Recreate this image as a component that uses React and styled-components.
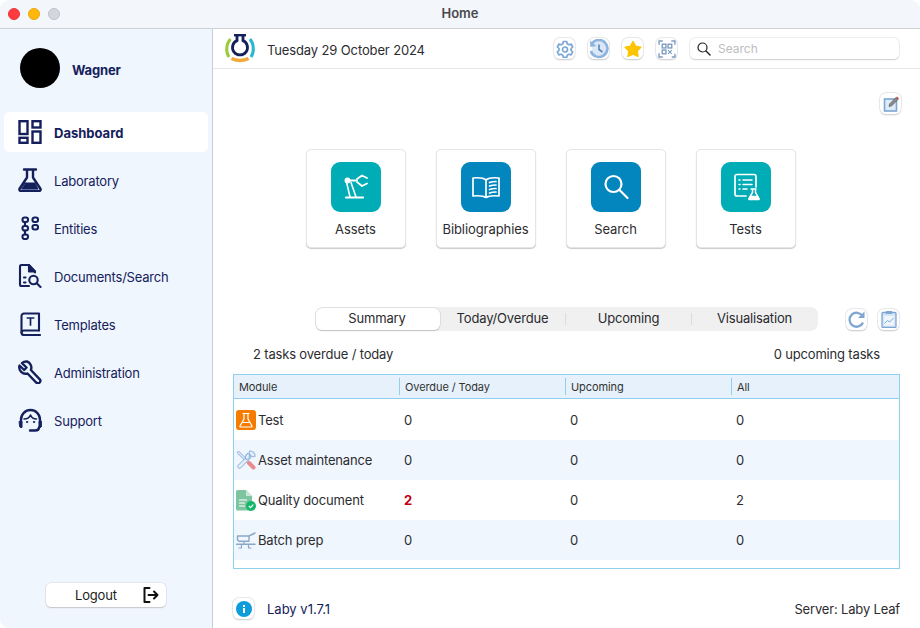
import React from "react";
import styled, { createGlobalStyle } from "styled-components";

const GlobalStyle = createGlobalStyle`
  html, body { margin: 0; padding: 0; background: #fff; }
  body { font-family: Inter, "Liberation Sans", sans-serif; letter-spacing: -0.17px; }
  * { box-sizing: border-box; }
`;

const Window = styled.div`
  width: 920px;
  height: 628px;
  display: flex;
  flex-direction: column;
  overflow: hidden;
  background: #fff;
`;

const TitleBar = styled.div`
  height: 29px;
  flex: none;
  display: flex;
  align-items: center;
  position: relative;
  padding-left: 8px;
  gap: 8px;
  background: #f3f6fb;
  border-bottom: 1px solid #cfd1d6;
  border-radius: 9px 9px 0 0;
`;

const Light = styled.span`
  width: 12px;
  height: 12px;
  border-radius: 50%;
  background: ${(props) => props.color};
  border: 1px solid ${(props) => props.edge};
`;

const Title = styled.div`
  position: absolute;
  left: 0;
  right: 0;
  top: 5px;
  text-align: center;
  font-size: 13px;
  line-height: 16px;
  font-weight: 600;
  letter-spacing: 0;
  color: #4a4a4d;
`;

const Body = styled.div`
  flex: 1;
  display: flex;
  min-height: 0;
`;

const Sidebar = styled.aside`
  width: 213px;
  flex: none;
  display: flex;
  flex-direction: column;
  background: #f0f6fd;
  border-right: 1px solid #c9ccd2;
  border-radius: 0 0 0 9px;
`;

const User = styled.div`
  display: flex;
  align-items: flex-start;
  gap: 12px;
  padding: 19px 0 0 20px;
  height: 83px;
`;

const Avatar = styled.div`
  width: 40px;
  height: 40px;
  border-radius: 50%;
  background: #000;
`;

const UserName = styled.span`
  font-size: 13px;
  line-height: 44px;
  font-weight: 700;
  color: #14205c;
`;

const Nav = styled.nav`
  display: flex;
  flex-direction: column;
  gap: 8px;
  padding-left: 4px;
  width: 208px;
`;

const NavItem = styled.div`
  height: 40px;
  display: flex;
  align-items: center;
  gap: 12px;
  padding-left: 14px;
  border-radius: 5px;
  font-size: 13px;
  line-height: 18px;
  color: #14205c;
  font-weight: ${(props) => (props.active ? 700 : 400)};
  letter-spacing: ${(props) => (props.active ? "0" : "-0.2px")};
  background: ${(props) => (props.active ? "#fff" : "transparent")};
  span { padding-top: 2px; }
  svg { width: 24px; height: 24px; flex: none; }
`;

const LogoutWrap = styled.div`
  margin-top: auto;
  padding: 0 0 21px 46px;
`;

const LogoutButton = styled.div`
  width: 120px;
  height: 24px;
  display: flex;
  align-items: center;
  justify-content: space-between;
  padding: 0 6px 0 29px;
  background: #fff;
  border-radius: 5px;
  box-shadow: 0 0 0 0.5px #d5d7db, 0 1px 1px #b8babf;
  font-size: 13px;
  color: #222;
`;

const Main = styled.main`
  flex: 1;
  min-width: 0;
  display: flex;
  flex-direction: column;
`;

const TopBar = styled.div`
  height: 40px;
  flex: none;
  display: flex;
  align-items: center;
  padding: 0 21px 0 11px;
  border-bottom: 1px solid #e6e6e8;
`;

const DateText = styled.span`
  font-size: 13px;
  line-height: 18px;
  padding-top: 2px;
  letter-spacing: -0.13px;
  color: #2c2c30;
  margin-left: 11px;
  margin-right: auto;
`;

const IconButton = styled.div`
  width: 21px;
  height: 21px;
  flex: none;
  display: flex;
  align-items: center;
  justify-content: center;
  background: #fff;
  border-radius: 6px;
  box-shadow: 0 0 0 0.5px #dcdde0, 0 0.5px 1.5px #bdbfc4;
  margin-left: ${(props) => props.gap || 0}px;
  svg { display: block; }
`;

const SearchBox = styled.div`
  width: 209px;
  height: 21px;
  margin-left: 13px;
  display: flex;
  align-items: center;
  gap: 7px;
  padding-left: 7px;
  border-radius: 5px;
  background: #fff;
  box-shadow: 0 0 0 0.5px #dcdde0, 0 1px 1px #c2c3c7;
  font-size: 12px;
  letter-spacing: 0;
  color: #bdbdbf;
`;

const EditRow = styled.div`
  display: flex;
  justify-content: flex-end;
  padding: 24px 19px 0 0;
  height: 45px;
`;

const Tiles = styled.div`
  display: flex;
  gap: 30px;
  padding: 35px 0 0 93px;
`;

const Tile = styled.div`
  width: 100px;
  height: 99px;
  display: flex;
  flex-direction: column;
  align-items: center;
  padding-top: 12px;
  background: #fff;
  border: 1px solid #e4e5e7;
  border-radius: 5px;
  box-shadow: 0 1px 1px #c9cace;
  font-size: 13px;
  letter-spacing: -0.08px;
  color: #2c2c30;
  white-space: nowrap;
`;

const TileIcon = styled.div`
  width: 50px;
  height: 50px;
  border-radius: 9px;
  margin-bottom: 9px;
  display: flex;
  align-items: center;
  justify-content: center;
  background: ${(props) => props.color};
`;

const TileLabel = styled.span`
  margin-right: 1px;
`;

const TabRow = styled.div`
  display: flex;
  align-items: center;
  padding: 60px 21px 0 103px;
`;

const Segments = styled.div`
  width: 502px;
  height: 22px;
  display: grid;
  grid-template-columns: 124px 126px 126px 1fr;
  align-items: center;
  background: #f0f0f1;
  border-radius: 6px;
  box-shadow: 0 0 0 0.5px #e2e2e4;
  margin-right: 29px;
`;

const Segment = styled.div`
  height: ${(props) => (props.active ? "22px" : "12px")};
  line-height: ${(props) => (props.active ? "21px" : "11px")};
  padding-right: ${(props) => (props.active ? "2px" : "0")};
  text-align: center;
  font-size: 13px;
  color: #2a2a2d;
  background: ${(props) => (props.active ? "#fff" : "transparent")};
  border-radius: ${(props) => (props.active ? "6px" : "0")};
  box-shadow: ${(props) => (props.active ? "0 0 0 0.5px #cfd0d3, 0 1px 1px #b5b6ba" : "none")};
  border-right: ${(props) => (props.divided ? "1px solid #dcdcde" : "none")};
`;

const Counts = styled.div`
  display: flex;
  justify-content: space-between;
  padding: 16px 40px 0 40px;
  height: 44px;
  font-size: 13px;
  line-height: 16px;
  color: #2c2c30;
`;

const Table = styled.div`
  margin-left: 20px;
  width: 667px;
  height: 195px;
  border: 1px solid #8fd0ef;
  font-size: 13px;
  color: #2c2c30;
`;

const HeadRow = styled.div`
  display: grid;
  grid-template-columns: 165px 166px 166px 1fr;
  height: 24px;
  align-items: center;
  background: #e6f1fb;
  border-bottom: 1px solid #8fd0ef;
  font-size: 11px;
  letter-spacing: -0.1px;
  color: #333;
`;

const HeadCell = styled.div`
  height: 17px;
  line-height: 19px;
  padding-left: 5px;
  border-left: ${(props) => (props.first ? "none" : "1px solid #8fd0ef")};
`;

const Rows = styled.div`
  padding-top: 1px;
`;

const Row = styled.div`
  display: grid;
  grid-template-columns: 165px 166px 166px 1fr;
  height: 40px;
  align-items: center;
  background: ${(props) => (props.alt ? "#f0f6fd" : "#fff")};
`;

const ModuleCell = styled.div`
  display: flex;
  align-items: center;
  gap: 2px;
  padding-left: 2px;
  svg { flex: none; }
`;

const Cell = styled.div`
  padding-left: 5px;
  color: ${(props) => (props.alert ? "#c00010" : "inherit")};
  font-weight: ${(props) => (props.alert ? 700 : 400)};
`;

const Footer = styled.div`
  margin-top: 29px;
  display: flex;
  align-items: center;
  padding: 0 20px 0 20px;
  font-size: 13px;
  color: #14205c;
`;

const Version = styled.span`
  margin-left: 13px;
  margin-right: auto;
  letter-spacing: 0;
`;

const Server = styled.span`
  color: #2c2c30;
`;

const navStroke = { fill: "none", stroke: "#14205c", strokeWidth: 2.4, strokeLinejoin: "round", strokeLinecap: "round" };

const DashboardIcon = () => (
  <svg viewBox="0 0 24 24" {...navStroke} strokeLinejoin="miter">
    <rect x="1.500" y="1.200" width="8" height="12.800" />
    <rect x="14.500" y="1.200" width="8" height="6.300" />
    <rect x="1.500" y="17.800" width="8" height="5" />
    <rect x="14.500" y="11.500" width="8" height="11.300" />
  </svg>
);

const FlaskIcon = () => (
  <svg viewBox="0 0 24 24" {...navStroke}>
    <path d="M6 1.500h12M9 2v7.500L1.700 20.500c-.8 1.300 0 2.500 1.300 2.500h18c1.300 0 2.100-1.200 1.300-2.500L15 9.500V2" />
    <path d="M7 15h10l3 6H4z" fill="#14205c" strokeWidth="1" />
  </svg>
);

const EntitiesIcon = () => (
  <svg viewBox="0 0 24 24" {...navStroke} strokeWidth="2.100">
    <rect x="4.500" y="1.500" width="5.500" height="4.500" rx="2" />
    <rect x="14.500" y="1.500" width="5.500" height="4.500" rx="2" />
    <rect x="4.500" y="10" width="5.500" height="4.500" rx="2" />
    <rect x="14.500" y="9" width="5.500" height="4.500" rx="2" />
    <rect x="4.500" y="18.500" width="5.500" height="4.500" rx="2" />
    <path d="M7 6v4M7 14.500v4" />
  </svg>
);

const DocSearchIcon = () => (
  <svg viewBox="0 0 24 24" {...navStroke} strokeWidth="2.100">
    <path d="M11 22H3.500a1.500 1.500 0 0 1-1.500-1.500v-18A1.500 1.500 0 0 1 3.500 1H11l6 6.500v1" />
    <path d="M11 1.500v6h6z" fill="#14205c" />
    <circle cx="15.500" cy="16" r="4.200" />
    <path d="M19 19.500l3.500 3.500M6 13.500h1.500M6 18.500h1.500" />
  </svg>
);

const TemplateIcon = () => (
  <svg viewBox="0 0 24 24" {...navStroke} strokeWidth="2.100">
    <path d="M21 18.500V1.500H6A2.500 2.500 0 0 0 3.500 4v16.500A2.500 2.500 0 0 0 6 23h16" />
    <path d="M3.500 20.500A2.500 2.500 0 0 1 6 18.500h15" />
    <path d="M9.500 6h6M12.500 6v7" strokeLinecap="square" strokeWidth="1.700" />
  </svg>
);

const WrenchIcon = () => (
  <svg viewBox="0 0 24 24" {...navStroke}>
    <path d="M9 1.500a6.500 6.500 0 0 0-5 1.700l4.500 4.300-2.300 2.500L1.500 5.500A6.500 6.500 0 0 0 9.500 13.500l9 9.300c1 .7 2.300.6 3.200-.3.800-.9.900-2.200.1-3.100l-8.900-9.400A6.500 6.500 0 0 0 9 1.500z" />
  </svg>
);

const SupportIcon = () => (
  <svg viewBox="0 0 24 24" {...navStroke}>
    <path d="M3 15v-3.500a9.500 9.500 0 0 1 19 0V15" />
    <path d="M6 11c4 0 5.500-1.500 6.500-4 1 2.500 3 4 6 4" strokeWidth="1.600" />
    <path d="M1.500 13.500h2.500v6H3a1.500 1.500 0 0 1-1.500-1.500zM23.500 13.500H21v6h1a1.500 1.500 0 0 0 1.500-1.500z" fill="#14205c" strokeWidth="1" />
    <path d="M21 19.500c0 2-2 3-4 3h-5" />
    <circle cx="9" cy="14" r=".7" fill="#14205c" strokeWidth=".8" />
    <circle cx="16" cy="14" r=".7" fill="#14205c" strokeWidth=".8" />
  </svg>
);

const LogoutIcon = () => (
  <svg width="18" height="18" viewBox="0 0 18 18" fill="none" stroke="#111" strokeWidth="2" strokeLinecap="round" strokeLinejoin="round">
    <path d="M7.500 2H2.500v14h5" />
    <path d="M6.500 9h9M12 5.500L15.500 9 12 12.500" />
  </svg>
);

const Logo = () => (
  <svg width="32" height="32" viewBox="0 0 32 32" fill="none" strokeLinecap="butt">
    <path d="M6.500 6C2 11 1.500 19 5 24" stroke="#9acb3c" strokeWidth="3" />
    <path d="M26 6c4 5 4.500 13 1 18" stroke="#27b8cf" strokeWidth="3" />
    <path d="M7.500 25.500c4.500 2.500 12.500 2.500 17 0" stroke="#f3a736" strokeWidth="3.500" />
    <path d="M10 2.200h12" stroke="#14205c" strokeWidth="2.400" />
    <path d="M13 2v5.600a7.500 7.500 0 1 0 6 0V2" stroke="#14205c" strokeWidth="2.800" />
  </svg>
);

const GearIcon = () => (
  <svg width="18" height="18" viewBox="0 0 18 18" fill="none" stroke="#7ba7d6" strokeWidth="1.700" strokeLinejoin="round">
    <path d="M7.300 1.500h3.400l.5 2.200 1.700 1 2.200-.7 1.600 3-1.600 1.500v1.900l1.600 1.500-1.600 3-2.200-.7-1.700 1-.5 2.200H7.300l-.5-2.200-1.700-1-2.200.7-1.600-3L3 10.400V8.500L1.400 7l1.600-3 2.200.7 1.700-1z" />
    <circle cx="9" cy="9.500" r="2.500" />
  </svg>
);

const HistoryIcon = () => (
  <svg width="20" height="20" viewBox="0 0 20 20">
    <path d="M3.500 6a7.500 7.500 0 1 1-.5 6z" fill="#d9e7f6" />
    <path d="M3 4.500A8.500 8.500 0 1 1 1.800 12" fill="none" stroke="#8db4de" strokeWidth="2.600" />
    <path d="M1 1.500l.3 6.500 6-1z" fill="#8db4de" />
    <path d="M10 5.500v5l3.500 2.500" fill="none" stroke="#5b86b8" strokeWidth="1.600" />
  </svg>
);

const StarIcon = () => (
  <svg width="18" height="18" viewBox="0 0 18 18">
    <path d="M9 1.500l2.500 4.700 5.300 1-3.600 3.900.8 5.300L9 14l-5 2.400.8-5.300L1.200 7.200l5.300-1z" fill="#fcc402" stroke="#fcc402" strokeLinejoin="round" strokeWidth="1.400" />
  </svg>
);

const QrIcon = () => (
  <svg width="18" height="18" viewBox="0 0 17 17" fill="none" stroke="#7d9cc2" strokeWidth="1.300">
    <path d="M1 4.500V1h3.500M12.500 1H16v3.500M1 12.500V16h3.500M16 13v3h-3" />
    <rect x="4" y="4" width="3.500" height="3.500" />
    <rect x="9.500" y="4" width="3.500" height="3.500" />
    <rect x="4" y="9.500" width="3.500" height="3.500" />
    <path d="M9.500 9.500l3.500 3.500M13 9.500l-3.500 3.500" strokeWidth="1" />
  </svg>
);

const SearchGlass = () => (
  <svg width="14" height="14" viewBox="0 0 14 14" fill="none" stroke="#222" strokeWidth="1.200" strokeLinecap="round">
    <circle cx="5.500" cy="5.500" r="4.500" />
    <path d="M9 9l4 4" strokeWidth="1.500" />
  </svg>
);

const EditIcon = () => (
  <svg width="18" height="18" viewBox="0 0 18 18">
    <rect x="2.500" y="4" width="12" height="12" fill="#dcebf9" stroke="#7ea6d3" strokeWidth="1.600" />
    <path d="M7 11.500l.5-2.500 6.500-6.500 2 2-6.500 6.500z" fill="#8a8a8a" stroke="#555" strokeWidth=".6" />
    <path d="M14 2.500l1-1 2 2-1 1z" fill="#c8444c" />
  </svg>
);

const tileStroke = { fill: "none", stroke: "#fff", strokeWidth: 1.500, strokeLinecap: "round", strokeLinejoin: "round" };

const RobotIcon = () => (
  <svg width="28" height="28" viewBox="0 0 28 28" {...tileStroke}>
    <path d="M4 24.500h17" strokeWidth="2.200" />
    <path d="M4.500 9L8 24M9 9.500L14 24" strokeWidth="1.600" />
    <circle cx="5.500" cy="7.500" r="2.200" fill="#fff" />
    <path d="M7 7.500h8" strokeWidth="2" />
    <path d="M15 6l5-3.500 5 2.500M15 9l5 4 5-2.500" strokeWidth="1.800" />
  </svg>
);

const BookIcon = () => (
  <svg width="32" height="28" viewBox="0 0 32 28" {...tileStroke} strokeWidth="1.700">
    <path d="M16 7C13 4.500 8 4.500 3 5v18c5-.5 10-.5 13 1.500 3-2 8-2 13-1.500V5c-5-.5-10-.5-13 2z" />
    <path d="M16 7v17" />
    <path d="M19.500 9.500c2-.8 4-1 6.500-1M19.500 13c2-.8 4-1 6.500-1M19.500 16.500c2-.8 4-1 6.500-1M19.500 20c2-.8 4-1 6.500-1" />
  </svg>
);

const SearchTileIcon = () => (
  <svg width="28" height="28" viewBox="0 0 28 28" {...tileStroke} strokeWidth="2.200">
    <circle cx="11.500" cy="11" r="8" />
    <path d="M17.500 17l8 8" />
  </svg>
);

const TestsIcon = () => (
  <svg width="30" height="30" viewBox="0 0 30 30" {...tileStroke}>
    <path d="M15 24H6a2 2 0 0 1-2-2V4.500a2 2 0 0 1 2-2h17a2 2 0 0 1 2 2V15" strokeWidth="1.700" />
    <path d="M12 8h9M12 12.500h9M12 17h4M8 8h1M8 12.500h1M8 17h1" />
    <path d="M20 17h5M21.500 17v3.500L18 26.500c-.4.700 0 1 .6 1h8.800c.6 0 1-.3.600-1L24.500 20.500V17" />
    <path d="M19.500 24.500h7l1 2.500h-9z" fill="#fff" />
  </svg>
);

const RefreshIcon = () => (
  <svg width="19" height="19" viewBox="0 0 19 19" fill="none">
    <path d="M15.500 6A7 7 0 1 0 16 12.500" stroke="#7ea6d3" strokeWidth="2.300" />
    <path d="M17.500 1.500v6.500H11z" fill="#7ea6d3" />
  </svg>
);

const ClipboardIcon = () => (
  <svg width="16" height="18" viewBox="0 0 16 18">
    <rect x="1" y="2.500" width="14" height="15" rx="1" fill="#d5e5f5" stroke="#7ea6d3" strokeWidth="1.300" />
    <rect x="5" y="1" width="6" height="3" fill="#7ea6d3" />
    <rect x="3" y="6" width="10" height="9.500" fill="#eef5fc" />
    <path d="M3.500 13.500l3-3 2 1.500 4-4" fill="none" stroke="#7ea6d3" strokeWidth="1" />
  </svg>
);

const InfoIcon = () => (
  <svg width="16" height="16" viewBox="0 0 16 16">
    <circle cx="8" cy="8" r="8" fill="#0d9ddb" />
    <rect x="7" y="7" width="2" height="5" fill="#fff" />
    <rect x="7" y="4" width="2" height="2" fill="#fff" />
  </svg>
);

const TestRowIcon = () => (
  <svg width="20" height="20" viewBox="0 0 20 20">
    <rect width="20" height="20" rx="3" fill="#f57c00" />
    <path d="M6.500 3.500h7M8 4v5l-4 7c-.3.600 0 1 .6 1h10.800c.6 0 .9-.4.6-1l-4-7V4" fill="none" stroke="#fff" strokeWidth="1.200" strokeLinejoin="round" />
    <path d="M6.500 12.500h7" stroke="#fff" strokeWidth="1" />
  </svg>
);

const MaintenanceRowIcon = () => (
  <svg width="20" height="20" viewBox="0 0 20 20" fill="none" strokeLinecap="round">
    <path d="M2.500 2.500L12 12" stroke="#8db4de" strokeWidth="3" />
    <path d="M2.500 2.500L12 12" stroke="#e6eff9" strokeWidth="1.300" />
    <path d="M3.500 16.500L13 7" stroke="#8db4de" strokeWidth="4.500" />
    <path d="M3.500 16.500L13 7" stroke="#e6eff9" strokeWidth="2.700" />
    <path d="M13.500 1a5 5 0 0 1 5.500 5.500l-3 .2-2.800-2.800z" fill="#e6eff9" stroke="#8db4de" strokeWidth="1.100" strokeLinejoin="round" />
    <path d="M10 9.500a5 5 0 0 1 1.500-6l2 .5-.5 5z" fill="#e6eff9" stroke="#8db4de" strokeWidth="1.100" strokeLinejoin="round" />
    <path d="M13 13l4.500 4.500" stroke="#e98a90" strokeWidth="4" />
  </svg>
);

const QualityRowIcon = () => (
  <svg width="20" height="21" viewBox="0 0 20 21">
    <path d="M0 1.500A1.500 1.500 0 0 1 1.500 0H10l6 6v13a1.500 1.500 0 0 1-1.500 1.500h-13A1.500 1.500 0 0 1 0 19z" fill="#7dc5a0" />
    <path d="M10 0v6h6z" fill="#c8e8d6" />
    <path d="M3 10h8M3 13h6M3 16h6" stroke="#fff" strokeWidth="1.200" />
    <circle cx="15" cy="16" r="5" fill="#12b76a" />
    <path d="M12.800 16l1.700 1.700 2.800-3" fill="none" stroke="#fff" strokeWidth="1.200" />
  </svg>
);

const BatchRowIcon = () => (
  <svg width="20" height="20" viewBox="0 0 20 20" fill="none" stroke="#8aa7c8" strokeWidth="1.400" strokeLinecap="round" strokeLinejoin="round">
    <path d="M1.500 6H13l6-3M1.500 6v3a2 2 0 0 0 2 2.200H13V6" />
    <path d="M0.700 14.300H19" strokeWidth="1.600" />
    <path d="M5.500 14.500V18M12.500 14.500V18M3 18h2.500M12.500 18H15M8 11.500v2.500" strokeWidth="1.200" />
  </svg>
);

const navItems = [
  { label: "Dashboard", icon: <DashboardIcon />, active: true },
  { label: "Laboratory", icon: <FlaskIcon /> },
  { label: "Entities", icon: <EntitiesIcon /> },
  { label: "Documents/Search", icon: <DocSearchIcon /> },
  { label: "Templates", icon: <TemplateIcon /> },
  { label: "Administration", icon: <WrenchIcon /> },
  { label: "Support", icon: <SupportIcon /> },
];

const tiles = [
  { label: "Assets", color: "#00acb5", icon: <RobotIcon /> },
  { label: "Bibliographies", color: "#0385bd", icon: <BookIcon /> },
  { label: "Search", color: "#0385bd", icon: <SearchTileIcon /> },
  { label: "Tests", color: "#00acb5", icon: <TestsIcon /> },
];

const modules = [
  { name: "Test", icon: <TestRowIcon />, overdue: 0, upcoming: 0, all: 0 },
  { name: "Asset maintenance", icon: <MaintenanceRowIcon />, overdue: 0, upcoming: 0, all: 0 },
  { name: "Quality document", icon: <QualityRowIcon />, overdue: 2, upcoming: 0, all: 2 },
  { name: "Batch prep", icon: <BatchRowIcon />, overdue: 0, upcoming: 0, all: 0 },
];

export default function App() {
  return (
    <Window>
      <GlobalStyle />
      <TitleBar>
        <Light color="#ff3b3f" edge="#e8363a" />
        <Light color="#ffb70a" edge="#e9a80c" />
        <Light color="#d3d6dd" edge="#bfc2c9" />
        <Title>Home</Title>
      </TitleBar>
      <Body>
        <Sidebar>
          <User>
            <Avatar />
            <UserName>Wagner</UserName>
          </User>
          <Nav>
            {navItems.map((item) => (
              <NavItem key={item.label} active={item.active}>
                {item.icon}
                <span>{item.label}</span>
              </NavItem>
            ))}
          </Nav>
          <LogoutWrap>
            <LogoutButton>
              Logout
              <LogoutIcon />
            </LogoutButton>
          </LogoutWrap>
        </Sidebar>
        <Main>
          <TopBar>
            <Logo />
            <DateText>Tuesday 29 October 2024</DateText>
            <IconButton><GearIcon /></IconButton>
            <IconButton gap={13}><HistoryIcon /></IconButton>
            <IconButton gap={13}><StarIcon /></IconButton>
            <IconButton gap={13}><QrIcon /></IconButton>
            <SearchBox>
              <SearchGlass />
              Search
            </SearchBox>
          </TopBar>
          <EditRow>
            <IconButton><EditIcon /></IconButton>
          </EditRow>
          <Tiles>
            {tiles.map((tile) => (
              <Tile key={tile.label}>
                <TileIcon color={tile.color}>{tile.icon}</TileIcon>
                <TileLabel>{tile.label}</TileLabel>
              </Tile>
            ))}
          </Tiles>
          <TabRow>
            <Segments>
              <Segment active>Summary</Segment>
              <Segment divided>Today/Overdue</Segment>
              <Segment divided>Upcoming</Segment>
              <Segment>Visualisation</Segment>
            </Segments>
            <IconButton><RefreshIcon /></IconButton>
            <IconButton gap={11}><ClipboardIcon /></IconButton>
          </TabRow>
          <Counts>
            <span>2 tasks overdue / today</span>
            <span>0 upcoming tasks</span>
          </Counts>
          <Table>
            <HeadRow>
              <HeadCell first>Module</HeadCell>
              <HeadCell>Overdue / Today</HeadCell>
              <HeadCell>Upcoming</HeadCell>
              <HeadCell>All</HeadCell>
            </HeadRow>
            <Rows>
              {modules.map((row, i) => (
                <Row key={row.name} alt={i % 2 === 1}>
                  <ModuleCell>
                    {row.icon}
                    {row.name}
                  </ModuleCell>
                  <Cell alert={row.overdue > 0}>{row.overdue}</Cell>
                  <Cell>{row.upcoming}</Cell>
                  <Cell>{row.all}</Cell>
                </Row>
              ))}
            </Rows>
          </Table>
          <Footer>
            <IconButton><InfoIcon /></IconButton>
            <Version>Laby v1.7.1</Version>
            <Server>Server: Laby Leaf</Server>
          </Footer>
        </Main>
      </Body>
    </Window>
  );
}
